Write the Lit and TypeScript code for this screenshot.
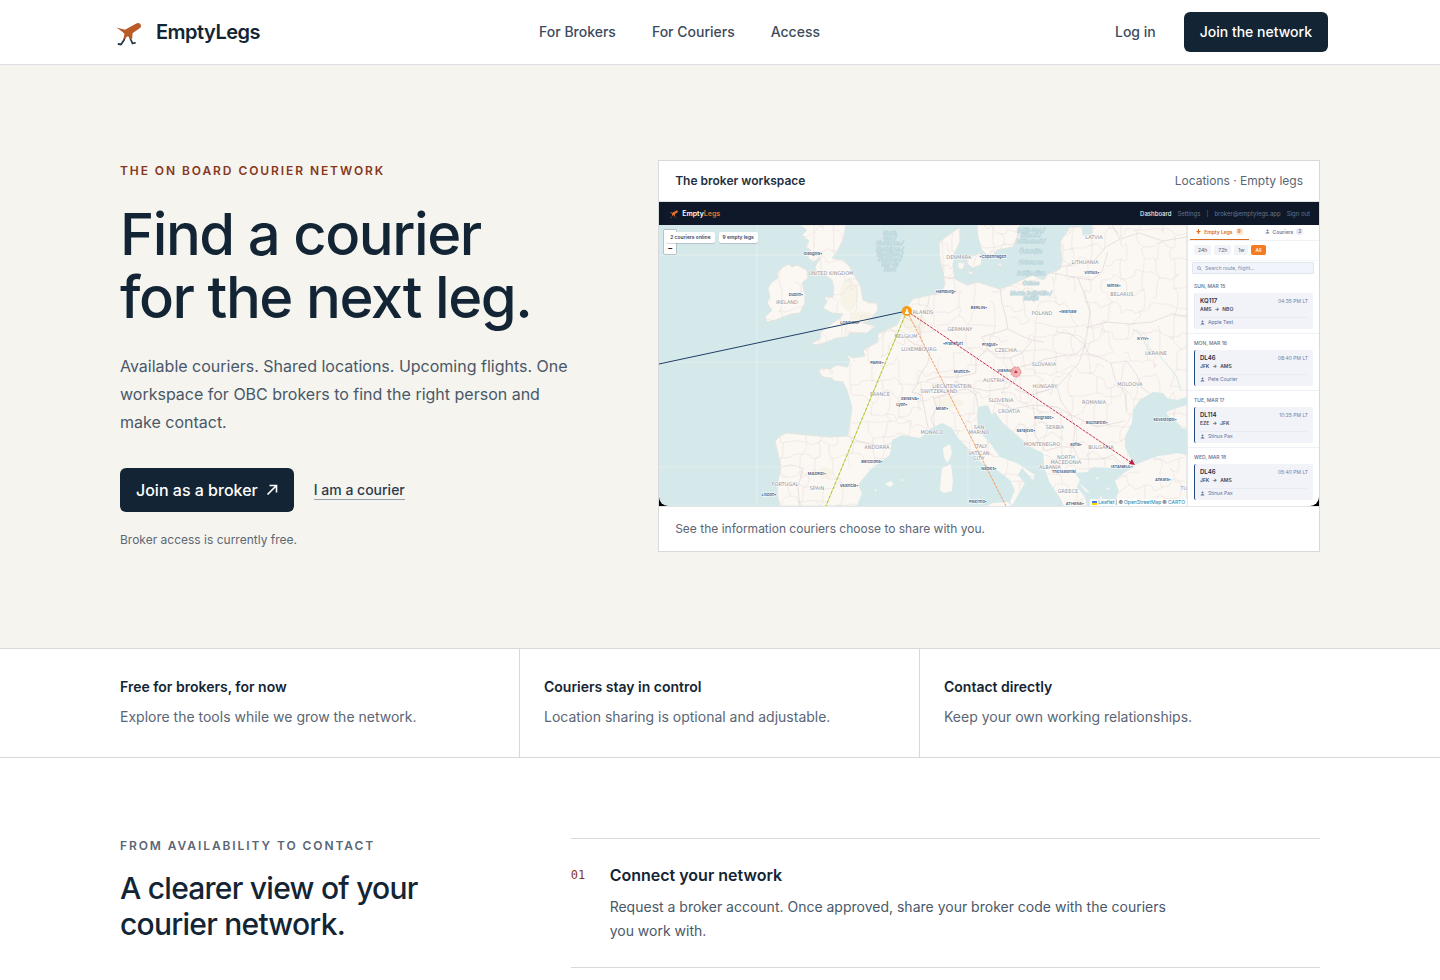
import { LitElement, html, svg, css } from "lit";
import { customElement } from "lit/decorators.js";

type Label = [number, number, string];

const COUNTRIES: Label[] = [
  [172, 48, "UNITED KINGDOM"], [128, 77, "IRELAND"], [300, 32, "DENMARK"], [435, 12, "LATVIA"],
  [426, 37, "LITHUANIA"], [463, 69, "BELARUS"], [383, 88, "POLAND"], [264, 87, "RLANDS"],
  [301, 104, "GERMANY"], [247, 111, "BELGIUM"], [260, 124, "LUXEMBOURG"], [347, 125, "CZECHIA"],
  [385, 139, "SLOVAKIA"], [497, 128, "UKRAINE"], [335, 155, "AUSTRIA"], [386, 161, "HUNGARY"],
  [471, 159, "MOLDOVA"], [293, 161, "LIECHTENSTEIN"], [280, 166, "SWITZERLAND"], [342, 175, "SLOVENIA"],
  [350, 186, "CROATIA"], [435, 177, "ROMANIA"], [396, 202, "SERBIA"], [273, 207, "MONACO"],
  [320, 202, "SAN"], [320, 207, "MARINO"], [383, 219, "MONTENEGRO"], [442, 222, "BULGARIA"],
  [322, 221, "ITALY"], [320, 228, "VATICAN"], [320, 233, "CITY"], [407, 232, "NORTH"],
  [407, 237, "MACEDONIA"], [391, 242, "ALBANIA"], [409, 266, "GREECE"], [525, 263, "TU"],
  [221, 169, "FRANCE"], [218, 222, "ANDORRA"], [126, 259, "PORTUGAL"], [158, 263, "SPAIN"],
];

const CITIES: Label[] = [
  [154, 29, "Glasgow•"], [137, 70, "Dublin•"], [191, 98, "LONDON•"], [287, 67, "Hamburg•"],
  [320, 83, "BERLIN•"], [334, 32, "•Copenhagen"], [433, 48, "Vilnius•"], [455, 61, "Minsk•"],
  [409, 87, "•Warsaw"], [484, 114, "KYIV•"], [294, 119, "•Frankfurt"], [331, 120, "Prague•"],
  [347, 146, "VIENNA•"], [303, 147, "Munich•"], [283, 184, "Milan•"], [251, 174, "GENEVA•"],
  [243, 180, "Lyon•"], [218, 138, "PARIS•"], [385, 193, "Belgrade•"], [438, 198, "Bucharest•"],
  [506, 195, "Sevastopol•"], [367, 206, "Sarajevo•"], [417, 220, "Sofia•"], [463, 242, "ISTANBUL•"],
  [405, 247, "Thessaloniki"], [504, 255, "Ankara•"], [416, 279, "ATHENS•"], [330, 244, "Naples•"],
  [319, 277, "Palermo•"], [213, 237, "Barcelona•"], [158, 249, "MADRID•"], [190, 261, "Valencia•"],
  [110, 270, "Lisbon•"],
];

const SEAS: Label[] = [
  [231, 8, "North"], [231, 13, "Sea /"], [231, 18, "Nordsøen /"], [231, 24, "Nordsjøen /"],
  [231, 29, "Noordzee /"], [231, 34, "Nordsee /"], [231, 39, "Mer du"], [231, 44, "Nord"],
  [372, 5, "Baltic Sea /"], [372, 10, "Itämeri /"], [372, 16, "Läänemeri /"], [372, 26, "Östersjön"],
  [372, 37, "Østersøen"], [372, 48, "Baltijas jūra"], [372, 58, "Ostsee"], [372, 68, "Morze Bałtyckie /"],
  [372, 73, "Baltija"],
];

const LAND = [
  "M141 0l7 5-5 5 7 6-3 6 5 3-3 8 5 4 8-5-6 10 2 6 8 2 7 5 2 8-1 9-9 0 3 5-4 6 9 5 11 1-3 4-10 7-10 8 1 5-10 6 6 1 10-3 10-4 10-1 3-4 17 0 9-7-13-3 7-3 8-10-1-7-9-1-5-2-2-13-5-9-6-11-7-7-11-2 5-6 6-12 3-15z",
  "M124 42l6-3 3 3 5-2 10 5 1 8-6 5 3 10v10l-5 10-9 1-8 3-7 3-9 2-2-5 7-7-5-7 3-6-2-9 4-6 6-4-1-6z",
  "M121 281l-2-9-1-10 4-20-3-14-3-12 5-5 7-3 20 2 23 2 18-1 2-13 2-16-5-17-4-8-8-1-5-3-7-1-5-6 4-3 8 1 7-4 11 2 2-7-4-6 7 4 12-2-2-6 15-8v-8l10-5 9-4 5-10 5-8 6-8 17-4 10-1 5-9-2-13-3-13-1-17 11-8 10-7 0 15-5 10-2 13 2 14 12 6 11-3 9 3 13 4 13-5 20-9 10 5 5-6 12-5 2-10-2-17 7-10 3-5h12l1 8 9-1V0h95v281z",
  "M318 0l1 12 4 13 8 8 7-8 16-3 4-10 3-12z",
  "M308 32l6-1 7-3 2 6-1 6-9 3-5-5z",
  "M299 37l7 1-2 7-5-2z",
  "M357 17l3-8 1 3-2 8zM340 38l3 1-1 2-3-1zM308 46l7 1-3 3z",
];

const WATER = [
  "M198 281l5-13-4-8 12-15 9-7 11-8 2-15 10-5 18 3 12-10 10-5 10 5 6 10 12 12 12 13 15 7 13 10 5 10-5 12 2 4 5-9 8-14-7-8 4-7 11 12 2-5-18-12-17-6-10-14-12-13-1-15 1-8 10-2 4 10 3-3 8 11 14 12 13 12 13 6 2 17 5 13 13 19 2 4h22l-2-9-8-10 3-7-5-7 12-1 6-5 20 1 14-2 9 0-12 7-9 8 4 10-4 10 2 6z",
  "M528 230l-9-2-11 2-9 1-11 4-12 5-5-8-5-10 0-10 7-14 1-13 7-10 13-8 10 1 4 5 10 2 10-3 0 8-10 3-10 4 0 3 10 7 5 6 5 1z",
];

const ISLANDS = [
  "M284 223l7-4 2 9-2 6-3 4-3-6z",
  "M283 243l9-4 2 16-1 11-8 2-4-3 1-12z",
  "M328 281l6-3 15-1 3 4zM226 259l6-3 3 3-4 3zM215 265l3-1-1 3zM241 254l4 1-2 1z",
  "M400 270l8-1 8 4-3 8h-8zM420 258l5 4 6 6-4-1zM437 252l3 1-2 2zM447 262l4 2-3 1zM441 271l3 2-3 1z",
];

const BORDERS = [
  "M122 242l10-2 12 3-2 9-3 10 2 19", "M189 211l10 5 12 3 12 2 10-3",
  "M229 102l8 6 10 5 8 6 8 2 8 5-2 12-8 12-2 8-6 9 10 3 2 12 4 20",
  "M243 90l9 6 8 8 3 14", "M271 68l-2 12-6 9-3 15", "M341 62l2 16 4 14 2 12 14 7 10 4 12 2",
  "M349 104l-16 5-10 3 6 12 10 9 12 0 12-5 10-12", "M329 124l-12 10 0 14-18 4-20 0-12 4",
  "M351 133l4 10 2 10-8 10-20 3-20-4-14-6", "M357 143l16-4 14-5 20-4 10 0 9-10-14-11-14-2",
  "M426 120l-6 18-22 24-26 8-16-6", "M398 162l4 14 10 14 26 12 28-6", "M412 190l-14-8-24-2-20 4-16-6",
  "M374 180l2 14 0 16 10 16", "M412 190l4 14-2 18 6 12 24 0 10-4 8 8", "M386 226l14-4 14 0",
  "M391 243l10-3 18-4", "M401 42l12-2 22-4 12-14 14-8-8-14", "M389 47l30 6 14 2 10-8 6-20",
  "M419 53l8 20 4 14-2 16-3 17", "M427 103l20-6 24 2 22-2 20-8 15 2",
  "M440 132l12 6 16-2 10 14 4 12 8 6", "M440 132l-10-2-4-10", "M452 138l4 16 10 14 2 18",
  "M284 52l6 2 6-2", "M276 203l-4-10 6-10-4-12", "M319 182l-2-12-8-6-14 2-20 8", "M462 14l18-6 24 8 24-4",
];

/* Faint district lines: a lattice whose corners are pushed around by a fixed hash. */
const jitter = (a: number, b: number) => {
  const n = Math.sin(a * 127 + b * 311) * 43758;
  return n - Math.floor(n);
};
const corner = (c: number, r: number): [number, number] => [
  Math.round(c * 17 + jitter(c, r) * 14),
  Math.round(r * 15 + jitter(r + 40, c) * 13),
];
const DISTRICTS = (() => {
  let d = "";
  for (let r = -1; r < 20; r++) {
    for (let c = -1; c < 32; c++) {
      const [x, y] = corner(c, r);
      for (const [i, j] of [[1, 0], [0, 1]]) {
        if (jitter(c * 3 + i, r * 5 + j) < 0.28) continue;
        const [u, v] = corner(c + i, r + j);
        const mx = Math.round((x + u) / 2 + jitter(u, y) * 8 - 4);
        const my = Math.round((y + v) / 2 + jitter(v, x) * 8 - 4);
        d += `M${x} ${y}Q${mx} ${y} ${mx} ${my}T${u} ${v}`;
      }
    }
  }
  return d;
})();

const LEGS = [
  { day: "SUN, MAR 15", flight: "KQ117", time: "04:35 PM LT", from: "AMS", to: "NBO", who: "Apple Test", own: false },
  { day: "MON, MAR 16", flight: "DL46", time: "08:40 PM LT", from: "JFK", to: "AMS", who: "Pete Courier", own: true },
  { day: "TUE, MAR 17", flight: "DL114", time: "10:25 PM LT", from: "EZE", to: "JFK", who: "Stinus Pax", own: true },
  { day: "WED, MAR 18", flight: "DL46", time: "05:40 PM LT", from: "JFK", to: "AMS", who: "Stinus Pax", own: true },
];

const bird = (legs: string, body: string) => html`<svg class="bird" viewBox="0 0 32 32" aria-hidden="true">
  <path d="M13.5 20l-1.500 4-3 4.500-2.500-.5M17.500 20l1.500 4 1.500 3.500 2.500-.7" fill="none" stroke=${legs} stroke-width="1.800" stroke-linecap="round" stroke-linejoin="round" />
  <path d="M4.500 11.500l8.500 2.300L24.300 7.500q3.200-1.500 4.500 1.200.8 2.200-.8 3.300L20.500 17.300l-.2 5-1.800 1-2-2.800h-1.500l-2.300 2.800-1.200-.8 1-4.500-1.800-2z" fill=${body} />
</svg>`;

const person = html`<svg class="glyph" viewBox="0 0 10 10" aria-hidden="true"><circle cx="5" cy="3" r="2" fill="currentColor"/><path d="M1 9q0-3 4-3t4 3z" fill="currentColor"/></svg>`;

@customElement("route-map")
export class RouteMap extends LitElement {
  static styles = css`
    :host { display: block; position: relative; min-width: 0; font-family: Inter, sans-serif; }
    .map { display: block; width: 100%; height: 100%; background: #d5e8ea; }
    .country { font-family: "DejaVu Sans", sans-serif; font-size: 5px; fill: #8e9098; text-anchor: middle; stroke: #fff; stroke-width: 1px; paint-order: stroke; }
    .city { font-size: 4px; font-weight: 600; fill: #41597c; text-anchor: middle; stroke: #fff; stroke-width: 1px; paint-order: stroke; }
    .sea { font-size: 5px; font-style: italic; fill: #d5e8ea; text-anchor: middle; stroke: #b4d1d6; stroke-width: 1px; paint-order: stroke; }
    .zoom { position: absolute; left: 4px; top: 4px; width: 14px; height: 26px; box-sizing: border-box; border: 1px solid #b9c3c6; border-radius: 2px; background: #fff; display: flex; flex-direction: column; justify-content: flex-end; }
    .zoom button { border: 0; background: none; padding: 0; height: 11px; font: 700 8px/11px Inter, sans-serif; color: #222; }
    .stats { position: absolute; left: 7px; top: 7px; display: flex; gap: 4px; }
    .stat { padding: 0 4px; background: #fff; border-radius: 2px; box-shadow: 0 1px 1px #0f172a2e; font-size: 5px; line-height: 11px; font-weight: 600; color: #3b4860; white-space: nowrap; }
    .credit { position: absolute; right: 0; bottom: 0; display: flex; align-items: center; gap: 1px; padding: 0 2px; background: #ffffffcc; font-size: 5px; line-height: 7px; color: #444; white-space: nowrap; }
    .credit a { color: #1787ad; text-decoration: none; }
    .flag { width: 5px; height: 4px; background: linear-gradient(#4c7be1 50%, #ffd500 50%); }
  `;

  render() {
    return html`
      <svg class="map" viewBox="0 0 528 281" preserveAspectRatio="xMidYMid slice" role="img" aria-label="Courier routes across Europe">
        <defs>
          <clipPath id="land">${LAND.map((d) => svg`<path d=${d} />`)}</clipPath>
        </defs>
        ${LAND.map((d) => svg`<path d=${d} fill="#fbf7f2" stroke="#e3e6e2" stroke-width="1" stroke-linejoin="round" />`)}
        <g clip-path="url(#land)" fill="none">
          <g fill="#f5efdc" opacity="0.5">
            <ellipse cx="190" cy="70" rx="9" ry="16" /><ellipse cx="204" cy="92" rx="11" ry="6" />
            <ellipse cx="256" cy="98" rx="12" ry="10" /><ellipse cx="166" cy="248" rx="8" ry="6" />
            <ellipse cx="290" cy="178" rx="14" ry="5" />
          </g>
          <path d=${DISTRICTS} stroke="#eadfe0" stroke-width="1" opacity="0.5" />
          ${BORDERS.map((d) => svg`<path d=${d} stroke="#dcc9cf" stroke-width="1" stroke-linejoin="round" opacity="0.5" />`)}
          <path d="M474 104l8 6 6 12 12 8 10 12 8 10 4 14" stroke="#d5e8ea" stroke-width="1" />
        </g>
        ${WATER.map((d) => svg`<path d=${d} fill="#d5e8ea" />`)}
        ${ISLANDS.map((d) => svg`<path d=${d} fill="#fbf7f2" />`)}
        <path d="M98 0V281M309 170V281M0 30H290M0 137H528M0 242H528" stroke="#fff" opacity="0.35" fill="none" />
        ${SEAS.map(([x, y, t]) => svg`<text class="sea" x=${x} y=${y + 2}>${t}</text>`)}
        ${COUNTRIES.map(([x, y, t]) => svg`<text class="country" x=${x} y=${y + 2}>${t}</text>`)}
        ${CITIES.map(([x, y, t]) => svg`<text class="city" x=${x} y=${y + 1}>${t}</text>`)}
        <path d="M248 86L0 139" stroke="#1e3f66" fill="none" />
        <path d="M248 86L167 281" stroke="#d8e27c" fill="none" />
        <path d="M248 86L167 281" stroke="#a9c440" stroke-dasharray="3 2" fill="none" />
        <path d="M248 86L347 281" stroke="#f2a069" stroke-dasharray="3 1" fill="none" />
        <path d="M248 86L473 238" stroke="#c8324e" stroke-dasharray="3 1" fill="none" />
        <path d="M476 240l-6-1 3-5z" fill="#c01f3d" />
        <circle cx="357" cy="147" r="5" fill="#f3a3a5" stroke="#e08287" stroke-dasharray="2 1" fill-opacity="0.8" />
        <path d="M357 145l2 3h-4z" fill="#c8323f" />
        <circle cx="248" cy="86" r="5" fill="#f59e1b" />
        <circle cx="248" cy="85" r="1" fill="#fff" /><path d="M246 89q0-3 2-3t2 3z" fill="#fff" />
      </svg>
      <div class="zoom"><button aria-label="Zoom out">−</button></div>
      <div class="stats"><span class="stat">2 couriers online</span><span class="stat">9 empty legs</span></div>
      <div class="credit"><span class="flag"></span><a href="#leaflet">Leaflet</a> | © <a href="#osm">OpenStreetMap</a> © <a href="#carto">CARTO</a></div>
    `;
  }
}

@customElement("legs-panel")
export class LegsPanel extends LitElement {
  static styles = css`
    :host { display: block; box-sizing: border-box; width: 132px; border-left: 1px solid #e4e8ee; background: #fff; font: 500 5px/6px Inter, sans-serif; color: #64748b; overflow: hidden; }
    .tabs { display: grid; grid-template-columns: 59px 1fr; padding-left: 2px; border-bottom: 1px solid #eef1f5; }
    .tab { display: flex; align-items: center; justify-content: center; gap: 3px; height: 15px; padding: 0 0 1px; border: 0; border-bottom: 1px solid transparent; box-sizing: border-box; background: none; font: 600 5px/6px Inter, sans-serif; color: #6b7da0; white-space: nowrap; }
    .on { color: #dd6b20; border-bottom-color: #dd6b20; }
    .count { padding: 0 2px; border-radius: 4px; background: #e6eaf3; line-height: 7px; }
    .on .count { background: #fde3c8; }
    .glyph { width: 5px; height: 5px; flex: none; }
    .ranges { display: flex; gap: 3px; padding: 4px 6px 5px; border-bottom: 1px solid #f3f5f8; }
    .range { border: 0; border-radius: 2px; background: #f1f3f8; padding: 0 4px; font: 500 5px/10px Inter, sans-serif; color: #64748b; }
    .pick { background: #f47b20; color: #fff; }
    .search { display: flex; align-items: center; gap: 3px; height: 12px; margin: 1px 5px 3px 4px; padding: 0 4px; box-sizing: border-box; border: 1px solid #e0e5f0; border-radius: 1px; background: #f1f4fa; }
    .search input { flex: 1; min-width: 0; border: 0; padding: 0; background: none; font: 400 5px/6px Inter, sans-serif; }
    .search input::placeholder { color: #7c8ba5; opacity: 1; }
    .day { padding: 6px 6px 4px; border-bottom: 1px solid #edf0f5; }
    .day:last-child { border-bottom: 0; }
    .date { margin: 0 0 4px; font: 500 5px/6px Inter, sans-serif; color: #5f6f8d; }
    .leg { box-sizing: border-box; height: 36px; padding: 4px 5px 0; background: #f1f3f9; border-left: 1px solid #e6eaf3; border-radius: 2px; }
    .own { border-left-color: #24497e; }
    .row { display: flex; justify-content: space-between; align-items: center; line-height: 8px; }
    .flight { font-size: 6px; font-weight: 600; color: #1f2c42; }
    .time { font-weight: 400; color: #6f80a6; }
    .path { display: flex; gap: 3px; line-height: 9px; font-weight: 600; color: #3b4860; }
    .who { display: flex; align-items: center; gap: 3px; margin-top: 3px; border-top: 1px solid #e8ebf3; line-height: 9px; font-weight: 400; color: #63759a; }
  `;

  render() {
    return html`
      <div class="tabs">
        <button class="tab on"><svg class="glyph" viewBox="0 0 10 10" aria-hidden="true"><path d="M5 0v9M1 5h8M3 8h4" stroke="currentColor" stroke-width="2" fill="none"/></svg>Empty Legs <span class="count">9</span></button>
        <button class="tab">${person}Couriers <span class="count">2</span></button>
      </div>
      <div class="ranges">
        <button class="range">24h</button><button class="range">72h</button><button class="range">1w</button><button class="range pick">All</button>
      </div>
      <label class="search">
        <svg class="glyph" viewBox="0 0 10 10" aria-hidden="true"><circle cx="4" cy="4" r="3" fill="none" stroke="currentColor"/><path d="M6 6l3 3" stroke="currentColor"/></svg>
        <input type="text" aria-label="Search route or flight" placeholder="Search route, flight..." />
      </label>
      ${LEGS.map((l) => html`<section class="day">
        <h4 class="date">${l.day}</h4>
        <div class="leg ${l.own ? "own" : ""}">
          <div class="row"><span class="flight">${l.flight}</span><span class="time">${l.time}</span></div>
          <div class="path"><span>${l.from}</span><span>→</span><span>${l.to}</span></div>
          <div class="who">${person}${l.who}</div>
        </div>
      </section>`)}
    `;
  }
}

@customElement("app-root")
export class AppRoot extends LitElement {
  static styles = css`
    :host { display: block; min-height: 100vh; background: #fff; font-family: Inter, sans-serif; color: #132534; }
    a { color: inherit; text-decoration: none; }
    h1, h2, h3, p { margin: 0; }
    .bird { display: block; }
    .top { position: relative; background: #fff; box-shadow: 0 1px 0 #dcdfe4; }
    .bar { display: flex; align-items: center; justify-content: space-between; max-width: 1216px; height: 64px; margin: 0 auto; padding: 0 32px; }
    .brand { display: flex; align-items: center; gap: 12px; font-size: 20px; line-height: 28px; font-weight: 600; letter-spacing: -0.025em; }
    .brand .bird { width: 32px; height: 32px; }
    .links { display: flex; gap: 36px; font-size: 14px; line-height: 20px; font-weight: 500; color: #3d4b5c; }
    .account { display: flex; align-items: center; gap: 12px; font-size: 14px; line-height: 20px; font-weight: 500; }
    .login { padding: 0 16px; color: #3d4b5c; }
    .join { padding: 10px 16px; border-radius: 6px; background: #132534; color: #fff; }
    .wrap { max-width: 1200px; margin: 0 auto; }
    .hero { background: #f5f4ef; padding: 96px 32px; }
    .split { display: grid; grid-template-columns: 9fr 13fr; gap: 80px; align-items: center; }
    .eyebrow { font-size: 12px; line-height: 16px; font-weight: 600; letter-spacing: 0.16em; color: #86371d; }
    .title { margin-top: 24px; font-size: 58px; line-height: 63px; font-weight: 500; letter-spacing: -0.025em; }
    .lead { margin-top: 23px; font-size: 16px; line-height: 28px; color: #4a5868; }
    .actions { display: flex; align-items: center; gap: 20px; margin-top: 32px; }
    .primary { display: flex; align-items: center; gap: 8px; padding: 8px 16px; border-radius: 6px; background: #132534; color: #fff; font-size: 16px; line-height: 28px; font-weight: 500; }
    .arrow { width: 12px; height: 12px; }
    .second { border-bottom: 1px solid #96a0ad; font-size: 14px; line-height: 18px; font-weight: 500; color: #2b3b4b; }
    .note { margin-top: 19px; font-size: 12px; line-height: 18px; color: #5d6875; }
    .frame { border: 1px solid #d7dadd; background: #fff; font-size: 12px; line-height: 20px; color: #5a6675; }
    .cap { display: flex; justify-content: space-between; padding: 10px 16px; border-bottom: 1px solid #dfe3e6; }
    .cap strong { font-weight: 600; color: #1f3142; }
    .foot { padding: 12px 16px; border-top: 1px solid #e3e6e8; }
    .shot { background: #000; }
    .appbar { display: flex; align-items: center; gap: 6px; height: 23px; padding: 0 9px; background: #0f1828; font-size: 6px; line-height: 8px; color: #64748f; }
    .logo { display: flex; align-items: center; gap: 3px; margin-right: auto; font-size: 7px; font-weight: 600; color: #fff; }
    .logo .bird { width: 11px; height: 11px; }
    .logo em { font-style: normal; color: #e0762d; }
    .now { color: #e8ecf2; font-weight: 500; }
    .body { display: grid; grid-template-columns: minmax(0, 1fr) 132px; border-radius: 0 0 9px 9px; overflow: hidden; height: 281px; }
    .facts { border: solid #d7dadd; border-width: 1px 0; padding: 0 32px; }
    .cells { display: grid; grid-template-columns: repeat(3, 1fr); }
    .cell { padding: 28px 24px; border-right: 1px solid #d7dadd; font-size: 14px; line-height: 24px; color: #5a6675; }
    .cell:first-child { padding-left: 0; }
    .cell:last-child { border-right: 0; }
    .cell h3 { margin-bottom: 8px; font-size: 14px; line-height: 20px; font-weight: 600; color: #132534; }
    .how { padding: 80px 32px 0; }
    .steps { display: grid; grid-template-columns: minmax(0, 1fr) minmax(0, 2fr); gap: 76px; }
    .quiet { color: #5a6675; }
    .sub { margin-top: 16px; font-size: 30px; line-height: 36px; font-weight: 500; letter-spacing: -0.025em; }
    .list { margin: 0; padding: 0; list-style: none; border-bottom: 1px solid #d7dadd; }
    .step { display: grid; grid-template-columns: 15px minmax(0, 1fr); gap: 24px; padding: 24px 0; border-top: 1px solid #d7dadd; }
    .num { font: 400 12px/24px "DejaVu Sans Mono", monospace; color: #86371d; }
    .step h3 { font-size: 16px; line-height: 24px; font-weight: 600; }
    .step p { max-width: 576px; margin-top: 8px; font-size: 14px; line-height: 24px; color: #4a5868; }
  `;

  render() {
    return html`
      <header class="top"><div class="bar">
        <a class="brand" href="#home">${bird("#25384a", "#b85b27")}EmptyLegs</a>
        <nav class="links"><a href="#brokers">For Brokers</a><a href="#couriers">For Couriers</a><a href="#access">Access</a></nav>
        <div class="account"><a class="login" href="#login">Log in</a><a class="join" href="#join">Join the network</a></div>
      </div></header>
      <main>
        <section class="hero"><div class="wrap split">
          <div>
            <p class="eyebrow">THE ON BOARD COURIER NETWORK</p>
            <h1 class="title">Find a courier<br />for the next leg.</h1>
            <p class="lead">Available couriers. Shared locations. Upcoming flights. One workspace for OBC brokers to find the right person and make contact.</p>
            <div class="actions">
              <a class="primary" href="#join">Join as a broker<svg class="arrow" viewBox="0 0 12 12" aria-hidden="true"><path d="M1.500 10.500l9-9M3.500 1.500h7v7" fill="none" stroke="currentColor" stroke-width="1.600"/></svg></a>
              <a class="second" href="#courier">I am a courier</a>
            </div>
            <p class="note">Broker access is currently free.</p>
          </div>
          <div class="frame">
            <div class="cap"><strong>The broker workspace</strong><span>Locations · Empty legs</span></div>
            <div class="shot">
              <div class="appbar"><div class="logo">${bird("#8a4a2a", "#e0702a")}<span>Empty<em>Legs</em></span></div><span class="now">Dashboard</span><span>Settings</span><span>|</span><span>broker@emptylegs.app</span><span>Sign out</span></div>
              <div class="body"><route-map></route-map><legs-panel></legs-panel></div>
            </div>
            <div class="foot">See the information couriers choose to share with you.</div>
          </div>
        </div></section>
        <section class="facts"><div class="wrap cells">
          <div class="cell"><h3>Free for brokers, for now</h3><p>Explore the tools while we grow the network.</p></div>
          <div class="cell"><h3>Couriers stay in control</h3><p>Location sharing is optional and adjustable.</p></div>
          <div class="cell"><h3>Contact directly</h3><p>Keep your own working relationships.</p></div>
        </div></section>
        <section class="how"><div class="wrap steps">
          <div><p class="eyebrow quiet">FROM AVAILABILITY TO CONTACT</p><h2 class="sub">A clearer view of your courier network.</h2></div>
          <ol class="list"><li class="step"><span class="num">01</span><div>
            <h3>Connect your network</h3>
            <p>Request a broker account. Once approved, share your broker code with the couriers you work with.</p>
          </div></li></ol>
        </div></section>
      </main>
    `;
  }
}
